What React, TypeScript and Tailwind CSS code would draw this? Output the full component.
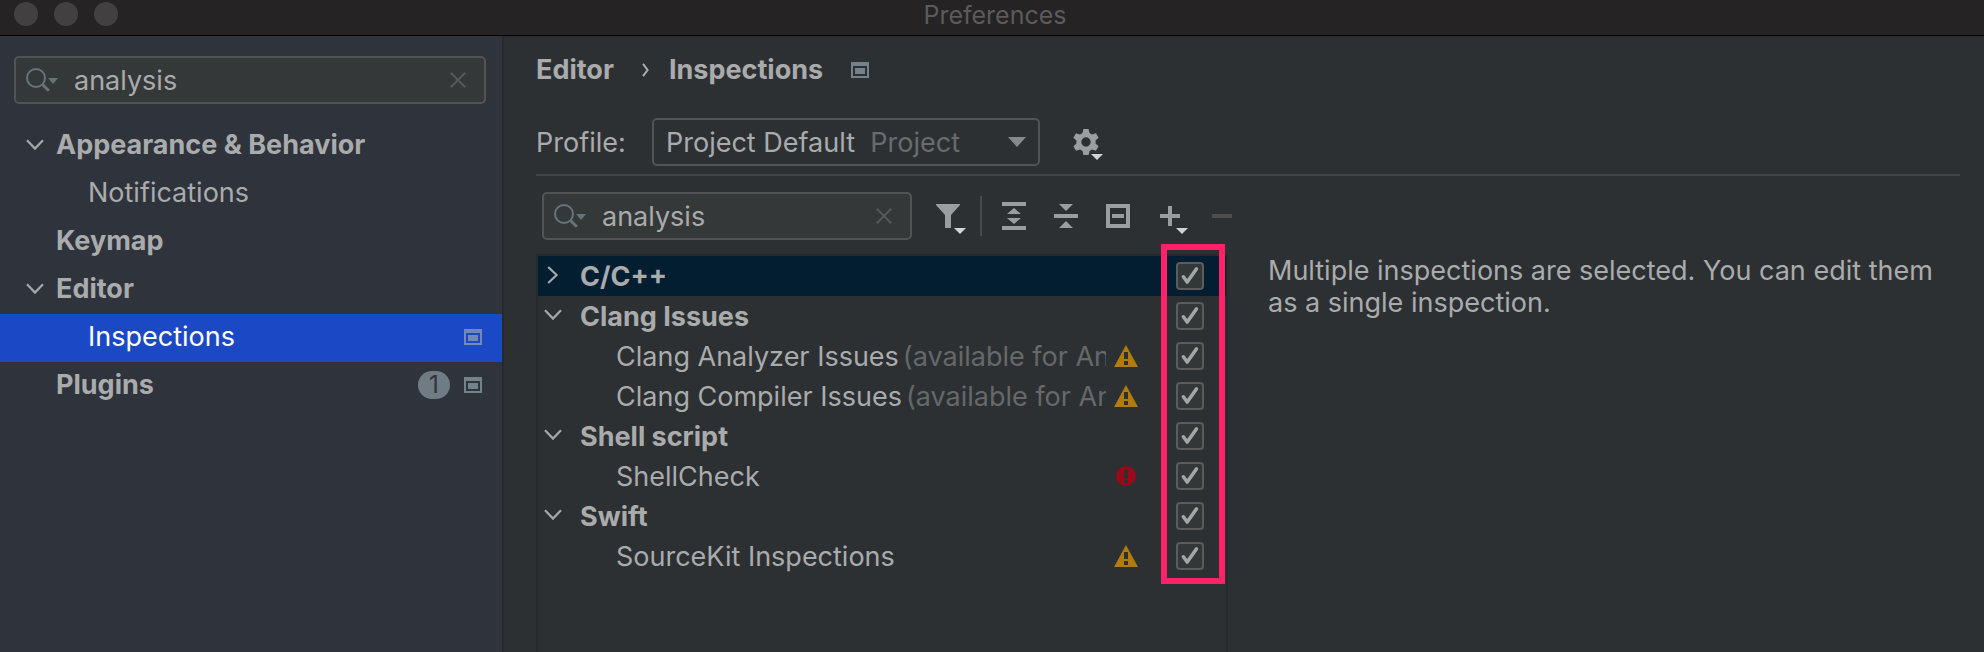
import React from "react";

type Category = { label: string; kind: "group" | "page"; expanded?: boolean; selected?: boolean; badge?: number; projectLevel?: boolean };
type Inspection = { label: string; kind: "group" | "item"; open?: boolean; hint?: string; severity?: "warning" | "error"; selected?: boolean };

const categories: Category[] = [
  { label: "Appearance & Behavior", kind: "group", expanded: true },
  { label: "Notifications", kind: "page" },
  { label: "Keymap", kind: "group" },
  { label: "Editor", kind: "group", expanded: true },
  { label: "Inspections", kind: "page", selected: true, projectLevel: true },
  { label: "Plugins", kind: "group", badge: 1, projectLevel: true },
];

const inspections: Inspection[] = [
  { label: "C/C++", kind: "group", open: false, selected: true },
  { label: "Clang Issues", kind: "group", open: true },
  { label: "Clang Analyzer Issues", kind: "item", hint: "(available for Analyzer)", severity: "warning" },
  { label: "Clang Compiler Issues", kind: "item", hint: "(available for Analyzer)", severity: "warning" },
  { label: "Shell script", kind: "group", open: true },
  { label: "ShellCheck", kind: "item", severity: "error" },
  { label: "Swift", kind: "group", open: true },
  { label: "SourceKit Inspections", kind: "item", severity: "warning" },
];

function ChevronDown() {
  return (
    <svg width="18" height="12" viewBox="0 0 18 12" fill="none" stroke="#a5a7aa" strokeWidth="2.2" aria-hidden="true">
      <path d="M1 1.2 9 9.6 17 1.2" />
    </svg>
  );
}

function ChevronRight() {
  return (
    <svg width="12" height="18" viewBox="0 0 12 18" fill="none" stroke="#a5a7aa" strokeWidth="2.2" aria-hidden="true">
      <path d="M1.2 1 9.6 9 1.2 17" />
    </svg>
  );
}

function ProjectIcon({ color }: { color: string }) {
  return (
    <svg width="18" height="16" viewBox="0 0 18 16" fill={color} fillRule="evenodd" aria-hidden="true">
      <path d="M0 0h18v16H0zM2 4v10h14V4z" />
      <path d="M4 6h10v6H4z" />
    </svg>
  );
}

function SearchField({ id, label, className }: { id: string; label: string; className: string }) {
  return (
    <div className={`flex h-12 items-center rounded-[5px] border-2 border-[#515354] bg-[#353839] pl-2.5 pr-[18px] ${className}`}>
      <svg className="shrink-0" width="34" height="26" viewBox="0 0 34 26" fill="none" aria-hidden="true">
        <circle cx="10" cy="11" r="9" stroke="#65737b" strokeWidth="2" />
        <path d="m16.2 17.2 6.6 6.6" stroke="#65737b" strokeWidth="3" />
        <path d="M22 11h10l-5 6z" fill="#65737b" />
      </svg>
      <label htmlFor={id} className="sr-only">{label}</label>
      <input id={id} type="text" defaultValue="analysis" className="ml-3.5 h-full min-w-0 flex-1 bg-transparent text-[#aaabac] outline-none" />
      <button type="button" aria-label={`Clear ${label}`} className="flex shrink-0">
        <svg width="16" height="16" viewBox="0 0 16 16" stroke="#55585a" strokeWidth="2" aria-hidden="true">
          <path d="m.8.8 14.4 14.4M15.2.8.8 15.2" />
        </svg>
      </button>
    </div>
  );
}

function SeverityIcon({ severity }: { severity: "warning" | "error" }) {
  if (severity === "warning") {
    return (
      <svg width="24" height="22" viewBox="0 0 24 22" role="img" aria-label="Warning">
        <path d="M12 0 24 22H0z" fill="#b27c0b" />
        <path d="M10 7h4v7h-4zM10 16h4v4h-4z" fill="#2d3032" />
      </svg>
    );
  }
  return (
    <svg className="mx-0.5" width="20" height="20" viewBox="0 0 20 20" role="img" aria-label="Error">
      <circle cx="10" cy="10" r="10" fill="#98091b" />
      <path d="M8 4h4v8H8zM8 14h4v3H8z" fill="#2d3032" />
    </svg>
  );
}

function GearIcon() {
  return (
    <svg width="32" height="36" viewBox="0 0 32 36" aria-hidden="true">
      <g transform="translate(14 18)" fill="#9b9ea1">
        <circle r="7.200" fill="none" stroke="#9b9ea1" strokeWidth="5" />
        {[0, 60, 120, 180, 240, 300].map((angle) => (
          <path key={angle} d="M-2.600-13h5.200l1.200 5.500h-7.600z" transform={`rotate(${angle})`} />
        ))}
      </g>
      <path d="M19 30h12l-6 6z" fill="#d0d2d3" />
    </svg>
  );
}

function Sidebar() {
  return (
    <nav aria-label="Settings" className="w-[504px] shrink-0 border-r-2 border-[#27292b] bg-[#2f333c] pt-5">
      <SearchField id="settings-search" label="settings search" className="ml-3.5 mr-4" />
      <ul className="mt-[18px]">
        {categories.map((c) => (
          <li key={c.label}>
            <button
              type="button"
              className={`flex h-12 w-full items-center pb-0.5 pr-5 text-left ${c.selected ? "bg-[#1b49c5] text-white" : ""}`}
            >
              <span className={`flex shrink-0 pl-[26px] ${c.kind === "page" ? "w-[88px]" : "w-14"}`}>{c.expanded && <ChevronDown />}</span>
              <span className={`flex-1 ${c.kind === "group" ? "font-bold" : ""}`}>{c.label}</span>
              {c.badge && (
                <span className="mr-3.5 flex h-7 w-8 items-center justify-center rounded-full bg-[#6f7c84] text-[24px] text-[#2f333c]">{c.badge}</span>
              )}
              {c.projectLevel && <ProjectIcon color={c.selected ? "#7389b4" : "#74828b"} />}
            </button>
          </li>
        ))}
      </ul>
    </nav>
  );
}

function Toolbar() {
  return (
    <div role="toolbar" aria-label="Inspection actions" className="flex h-[78px] items-center pl-1.5 pt-0.5">
      <SearchField id="inspection-search" label="inspection search" className="w-[370px]" />
      <button type="button" aria-label="Filter" className="ml-6">
        <svg width="30" height="36" viewBox="0 0 30 36" aria-hidden="true">
          <path d="M0 6h24v1l-9 10v13H9V17L0 7z" fill="#9b9ea1" />
          <path d="M18 30h12l-6 6z" fill="#d0d2d3" />
        </svg>
      </button>
      <span className="ml-3.5 h-10 w-0.5 bg-[#47494b]" />
      <button type="button" aria-label="Expand all" className="ml-5">
        <svg width="24" height="28" viewBox="0 0 24 28" fill="#9b9ea1" aria-hidden="true">
          <path d="M0 0h24v4H0zM0 24h24v4H0zM12 6l7 6H5zM5 16h14l-7 6z" />
        </svg>
      </button>
      <button type="button" aria-label="Collapse all" className="ml-7">
        <svg width="24" height="24" viewBox="0 0 24 24" fill="#9b9ea1" aria-hidden="true">
          <path d="M0 10h24v4H0zM5 0h14l-7 7zM12 17l7 7H5z" />
        </svg>
      </button>
      <button type="button" aria-label="Reset to empty" className="ml-7">
        <svg width="24" height="24" viewBox="0 0 24 24" fill="#9b9ea1" fillRule="evenodd" aria-hidden="true">
          <path d="M0 0h24v24H0zM4 4v16h16V4z" />
          <path d="M6 10h12v4H6z" />
        </svg>
      </button>
      <button type="button" aria-label="Add inspection" className="ml-[30px]">
        <svg width="28" height="36" viewBox="0 0 28 36" aria-hidden="true">
          <path d="M8 8h4v8h8v4h-8v8H8v-8H0v-4h8z" fill="#9b9ea1" />
          <path d="M16 30h12l-6 6z" fill="#d0d2d3" />
        </svg>
      </button>
      <button type="button" aria-label="Remove inspection" disabled className="ml-6">
        <svg width="20" height="4" viewBox="0 0 20 4" aria-hidden="true">
          <path d="M0 0h20v4H0z" fill="#4c4e50" />
        </svg>
      </button>
    </div>
  );
}

function InspectionTable() {
  return (
    <div className="relative w-[692px] shrink-0 border-2 border-b-0 border-[#27292a]">
      <table className="w-full table-fixed border-collapse">
        <colgroup>
          <col />
          <col className="w-[54px]" />
          <col className="w-[66px]" />
        </colgroup>
        <tbody>
          {inspections.map((row) => (
            <tr key={row.label} className={`h-10 ${row.selected ? "bg-[#041e31]" : ""}`}>
              <td className="p-0">
                <div className="flex h-10 items-center overflow-hidden whitespace-nowrap pt-0.5">
                  {row.kind === "group" ? (
                    <button type="button" aria-label={`${row.open ? "Collapse" : "Expand"} ${row.label}`} className="flex w-[42px] shrink-0 justify-start pb-1 pl-1.5">
                      {row.open ? <ChevronDown /> : <span className="pl-[3px]"><ChevronRight /></span>}
                    </button>
                  ) : (
                    <span className="w-[78px] shrink-0" />
                  )}
                  <span className={row.kind === "group" ? "font-bold" : ""}>{row.label}</span>
                  {row.hint && <span className="ml-1 text-[#66686a]">{row.hint}</span>}
                </div>
              </td>
              <td className="p-0 pl-2">{row.severity && <SeverityIcon severity={row.severity} />}</td>
              <td className="p-0 pl-4">
                <span className="relative flex size-7">
                  <input
                    type="checkbox"
                    defaultChecked
                    aria-label={`Enable ${row.label}`}
                    className="peer size-7 appearance-none rounded-[4px] border-2 border-[#5a5c5e] bg-[#333738]"
                  />
                  <svg
                    className="pointer-events-none absolute inset-0 hidden peer-checked:block"
                    width="28"
                    height="28"
                    viewBox="0 0 28 28"
                    fill="none"
                    stroke="#a3a5a6"
                    strokeWidth="3.6"
                    strokeLinecap="round"
                    strokeLinejoin="round"
                    aria-hidden="true"
                  >
                    <path d="m7.4 14.8 3.8 5.2 9.2-13" />
                  </svg>
                </span>
              </td>
            </tr>
          ))}
        </tbody>
      </table>
      <div className="pointer-events-none absolute -top-3 right-px h-[340px] w-16 border-6 border-[#ff2268]" />
    </div>
  );
}

export default function App() {
  return (
    <div className="flex min-h-screen flex-col bg-[#2d3032] font-['Inter','Liberation_Sans',sans-serif] text-[27px] leading-8 text-[#aaabac]">
      <header className="relative flex h-9 items-center justify-center border-b border-black bg-[#252324] pb-1.5">
        <div className="absolute left-3.5 top-0.5 flex gap-4">
          <span className="size-6 rounded-full bg-[#424041]" />
          <span className="size-6 rounded-full bg-[#424041]" />
          <span className="size-6 rounded-full bg-[#424041]" />
        </div>
        <h1 className="pl-1.5 text-[25px] text-[#5c5a5b]">Preferences</h1>
      </header>
      <div className="flex flex-1">
        <Sidebar />
        <main className="flex min-w-0 flex-1 flex-col pl-8 pr-6">
          <div className="flex h-[66px] items-center pt-0.5 font-bold">
            <a href="#editor">Editor</a>
            <svg className="ml-7 mr-5" width="7" height="14" viewBox="0 0 7 14" fill="none" stroke="#aaabac" strokeWidth="2" aria-hidden="true">
              <path d="m1 .8 4.6 6.2L1 13.2" />
            </svg>
            <h2 className="mr-7">Inspections</h2>
            <ProjectIcon color="#74828b" />
          </div>
          <div className="flex h-[74px] items-center border-b-2 border-[#414344] pb-2 pt-4">
            <label htmlFor="profile" className="w-[116px] pt-0.5">Profile:</label>
            <div className="relative flex w-[388px] items-center">
              <select id="profile" className="h-12 w-full appearance-none rounded-[5px] border-2 border-[#515354] bg-transparent pl-3 pt-0.5 outline-none">
                <option>Project Default</option>
              </select>
              <span className="pointer-events-none absolute right-20 pt-0.5 text-[#696b6d]">Project</span>
              <svg className="pointer-events-none absolute right-3.5" width="18" height="10" viewBox="0 0 18 10" fill="#85898b" aria-hidden="true">
                <path d="M0 0h18L9 10z" />
              </svg>
            </div>
            <button type="button" aria-label="Profile actions" className="ml-8">
              <GearIcon />
            </button>
          </div>
          <Toolbar />
          <div className="flex flex-1">
            <InspectionTable />
            <p className="ml-10 flex-1 pt-px">Multiple inspections are selected. You can edit them as a single inspection.</p>
          </div>
        </main>
      </div>
    </div>
  );
}
